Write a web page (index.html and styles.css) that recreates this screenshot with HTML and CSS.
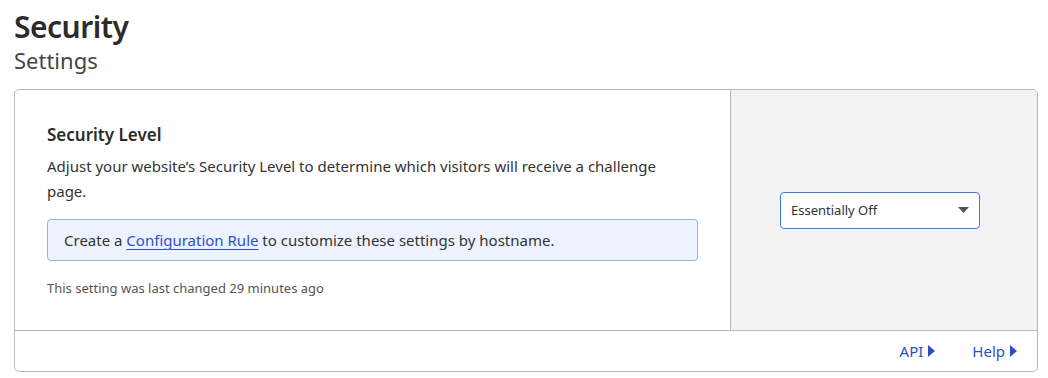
FILE: index.html
```html
<!DOCTYPE html>
<html lang="en">
<head>
  <meta charset="UTF-8" />
  <title>Security Settings</title>
  <link rel="stylesheet" href="styles.css">
</head>
<body>

<header class="page-head">
  <h1>Security</h1>
  <h2>Settings</h2>
</header>

<section class="card">
  <div class="card-body">
    <div class="card-main">
      <h3>Security Level</h3>
      <p class="desc">Adjust your website’s Security Level to determine which visitors will receive a challenge page.</p>
      <div class="notice">Create a <a href="#">Configuration Rule</a> to customize these settings by hostname.</div>
      <p class="changed">This setting was last changed 29 minutes ago</p>
    </div>
    <div class="card-side">
      <div class="select">
        <span>Essentially Off</span>
        <svg width="11" height="6" viewBox="0 0 11 6"><path d="M0 0h11L5.5 6z" fill="#555"/></svg>
      </div>
    </div>
  </div>
  <div class="card-foot">
    <a href="#">API <svg width="7" height="12" viewBox="0 0 7 12"><path d="M0 0l7 6-7 6z" fill="#2c4fc9"/></svg></a>
    <a href="#">Help <svg width="7" height="12" viewBox="0 0 7 12"><path d="M0 0l7 6-7 6z" fill="#2c4fc9"/></svg></a>
  </div>
</section>

</body>
</html>
```

FILE: styles.css
```css
* { box-sizing: border-box; }

body {
  margin: 0;
  padding: 8px 10px 0 14px;
  font-family: "Noto Sans", "Open Sans", sans-serif;
  color: #333;
  background: #fff;
}

.page-head h1 {
  margin: 0;
  font-size: 30px;
  font-weight: 600;
  line-height: 38px;
  letter-spacing: -0.5px;
  color: #2b2b2b;
}

.page-head h2 {
  margin: 0;
  font-size: 22px;
  font-weight: 400;
  line-height: 28px;
  color: #444;
}

.card {
  margin-top: 15px;
  border: 1px solid #b8b8b8;
  border-radius: 5px;
  overflow: hidden;
}

.card-body {
  display: flex;
  border-bottom: 1px solid #b8b8b8;
  height: 241px;
}

.card-main {
  width: 716px;
  padding: 33px 32px 0 32px;
  border-right: 1px solid #b8b8b8;
}

.card-main h3 {
  margin: 0 0 7px;
  font-size: 17px;
  font-weight: 600;
  line-height: 24px;
  color: #2b2b2b;
}

.desc {
  margin: 0;
  max-width: 640px;
  font-size: 15px;
  line-height: 25px;
  color: #333;
}

.notice {
  margin-top: 15px;
  height: 42px;
  padding: 0 16px;
  display: flex;
  align-items: center;
  font-size: 15px;
  background: #edf3fe;
  border: 1px solid #92b2ee;
  border-radius: 4px;
  color: #333;
  white-space: pre;
}

.notice a {
  color: #2c4fc9;
  text-decoration: underline;
  text-underline-offset: 3px;
}

.changed {
  margin: 18px 0 0;
  font-size: 13px;
  line-height: 18px;
  color: #555;
}

.card-side {
  flex: 1;
  background: #f2f2f2;
  display: flex;
  align-items: center;
  justify-content: center;
}

.select {
  width: 200px;
  height: 37px;
  margin-left: -8px;
  background: #fff;
  border: 1px solid #3b7cf0;
  border-radius: 4px;
  padding: 0 10px;
  display: flex;
  align-items: center;
  justify-content: space-between;
  font-size: 13px;
  color: #333;
}

.card-foot {
  height: 40px;
  display: flex;
  justify-content: flex-end;
  align-items: center;
  gap: 37px;
  padding-right: 20px;
}

.card-foot a {
  color: #2c4fc9;
  text-decoration: none;
  font-size: 15px;
  display: flex;
  align-items: center;
  gap: 5px;
}
```
